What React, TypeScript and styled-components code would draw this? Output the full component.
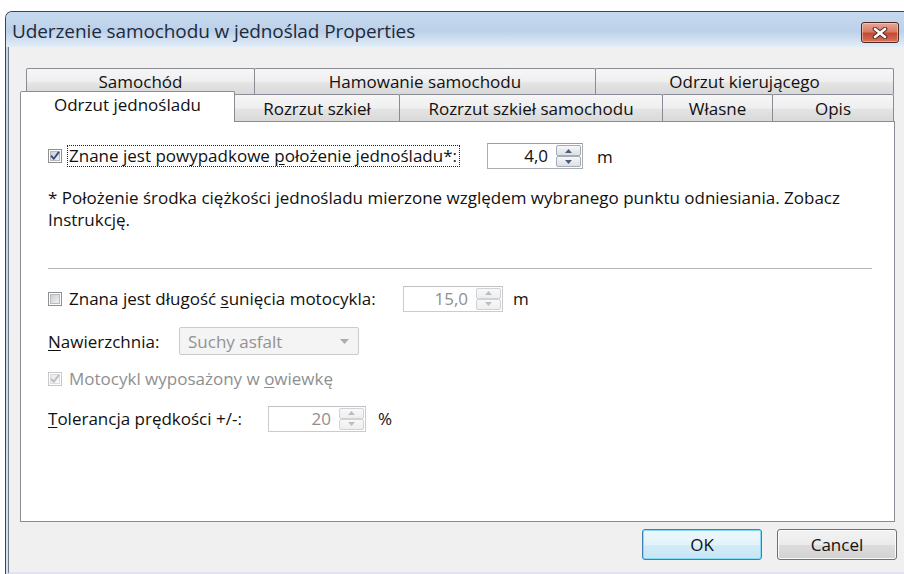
import React from 'react';
import styled, { createGlobalStyle, css } from 'styled-components';

const GlobalStyle = createGlobalStyle`
  html, body {
    margin: 0;
    padding: 0;
    background: #ffffff;
  }
  body {
    font-family: "Open Sans", "Noto Sans", "DejaVu Sans", sans-serif;
    font-size: 17px;
    color: #111;
    overflow: hidden;
  }
`;

const Window = styled.div`
  box-sizing: border-box;
  margin: 11px 0 0 5px;
  width: 899px;
  height: 563px;
  border-top: 1px solid #3b4656;
  border-left: 1px solid #3b4656;
  border-top-left-radius: 7px;
  background: linear-gradient(180deg, #c3d7ed 0%, #bed3ea 40%, #d3e2f2 100%);
  display: flex;
  flex-direction: column;
  overflow: hidden;
`;

const TitleBar = styled.div`
  height: 35px;
  flex: none;
  display: flex;
  align-items: flex-start;
  justify-content: space-between;
  background: linear-gradient(180deg, #c6d9ee 0%, #bcd1e9 55%, #d6e4f3 85%, #e4edf7 100%);
`;

const Title = styled.span`
  margin: 6px 0 0 6px;
  font-size: 19px;
  color: #1c2a3c;
  letter-spacing: -0.1px;
`;

const CloseButton = styled.div`
  box-sizing: border-box;
  width: 38px;
  height: 21px;
  margin: 10px 5px 0 0;
  border: 1px solid #4b2a26;
  border-radius: 3px;
  background: linear-gradient(180deg, #e7a898 0%, #d97c66 45%, #c54a32 55%, #d5735a 100%);
  box-shadow: inset 0 0 0 1px rgba(255, 220, 210, 0.5);
  display: flex;
  align-items: center;
  justify-content: center;
`;

const Client = styled.div`
  flex: 1;
  margin-left: 2px;
  border-left: 1px solid #6f7780;
  border-bottom: 2px solid #e4e2f0;
  background: #f0f0f0;
  padding: 21px 7px 0 11px;
  display: flex;
  flex-direction: column;
`;

const TabStrip = styled.div`
  display: flex;
  flex-direction: column;
`;

const TabRow = styled.div<{ $indent: number; $height: number }>`
  display: flex;
  align-items: flex-end;
  height: ${p => p.$height}px;
  padding-left: ${p => p.$indent}px;
`;

const Tab = styled.div<{ $width: number; $active?: boolean }>`
  box-sizing: border-box;
  flex: none;
  width: ${p => p.$width}px;
  height: 100%;
  margin-left: -1px;
  border: 1px solid #898c95;
  border-bottom: none;
  border-radius: 2px 2px 0 0;
  background: linear-gradient(180deg, #f6f6f6 0%, #efefef 50%, #e4e4e4 55%, #d9d9d9 100%);
  display: flex;
  align-items: center;
  justify-content: center;
  white-space: nowrap;

  &:first-child {
    margin-left: 0;
  }

  ${p =>
    p.$active &&
    css`
      position: relative;
      z-index: 1;
      height: 31px;
      margin-bottom: -1px;
      background: #ffffff;
      padding-bottom: 5px;
    `}
`;

const Panel = styled.div`
  box-sizing: border-box;
  width: 875px;
  height: 401px;
  border: 1px solid #898c95;
  background: #ffffff;
  padding: 21px 23px 0 27px;
  display: flex;
  flex-direction: column;
`;

const FormRow = styled.div<{ $top: number; $height: number }>`
  display: flex;
  align-items: center;
  height: ${p => p.$height}px;
  margin-top: ${p => p.$top}px;
`;

const CheckCell = styled.div<{ $width?: number }>`
  display: flex;
  align-items: center;
  flex: none;
  width: ${p => (p.$width ? `${p.$width}px` : 'auto')};
`;

const Label = styled.span<{ $disabled?: boolean; $width?: number }>`
  white-space: nowrap;
  color: ${p => (p.$disabled ? '#8f8f8f' : '#111')};
  ${p => p.$width && `width: ${p.$width}px; flex: none;`}
`;

const CheckText = styled(Label)<{ $focused?: boolean }>`
  margin-left: 5px;
  padding: 0 2px 0 1px;
  line-height: 20px;
  border: 1px ${p => (p.$focused ? 'dotted #222' : 'solid transparent')};
`;

const Key = styled.span`
  text-decoration: underline;
  text-underline-offset: 2px;
`;

const BoxFrame = styled.span`
  display: inline-flex;
  flex: none;
  width: 14px;
  height: 14px;
`;

const SpinBox = styled.div<{ $width: number; $disabled?: boolean }>`
  box-sizing: border-box;
  flex: none;
  width: ${p => p.$width}px;
  height: 26px;
  border: 1px solid ${p => (p.$disabled ? '#c9cbcf' : '#abadb3')};
  border-top-color: ${p => (p.$disabled ? '#bfc1c5' : '#9a9da4')};
  background: #ffffff;
  display: flex;
  align-items: stretch;
`;

const SpinValue = styled.span<{ $disabled?: boolean }>`
  flex: 1;
  text-align: right;
  padding-right: 8px;
  line-height: 24px;
  color: ${p => (p.$disabled ? '#8f8f8f' : '#111')};
`;

const SpinButtons = styled.div`
  width: 25px;
  display: flex;
  flex-direction: column;
  padding: 1px 1px 1px 0;
`;

const SpinButton = styled.div<{ $disabled?: boolean }>`
  flex: 1;
  box-sizing: border-box;
  border: 1px solid ${p => (p.$disabled ? '#cfd2d6' : '#a6acb3')};
  border-radius: 2px;
  background: ${p =>
    p.$disabled
      ? 'linear-gradient(180deg, #f8f8f8, #eeeeee)'
      : 'linear-gradient(180deg, #f7f8f9 0%, #e8ebee 50%, #dde1e5 100%)'};
  display: flex;
  align-items: center;
  justify-content: center;
`;

const Unit = styled.span<{ $gap: number }>`
  margin-left: ${p => p.$gap}px;
`;

const Footnote = styled.p`
  margin: 18px 0 0 0;
  width: 824px;
  line-height: 22px;
`;

const Separator = styled.div`
  margin-top: 37px;
  width: 824px;
  height: 1px;
  background: #b4b4b4;
`;

const Combo = styled.div`
  box-sizing: border-box;
  width: 180px;
  height: 28px;
  border: 1px solid #c9cbcf;
  border-radius: 2px;
  background: #f4f4f4;
  display: flex;
  align-items: center;
  justify-content: space-between;
  padding: 0 9px 0 8px;
  color: #929292;
`;

const Footer = styled.div`
  display: flex;
  justify-content: flex-end;
  gap: 15px;
  margin-top: 7px;
`;

const Button = styled.div<{ $primary?: boolean }>`
  box-sizing: border-box;
  width: 120px;
  height: 31px;
  border-radius: 3px;
  display: flex;
  align-items: center;
  justify-content: center;
  color: #111;
  border: 1px solid ${p => (p.$primary ? '#3c7fb1' : '#707070')};
  background: ${p =>
    p.$primary
      ? 'linear-gradient(180deg, #eff8fd 0%, #e3f3fb 50%, #d2ebf8 51%, #c8e6f6 100%)'
      : 'linear-gradient(180deg, #f3f3f3 0%, #ebebeb 50%, #dddddd 51%, #d2d2d2 100%)'};
  box-shadow: ${p => (p.$primary ? 'inset 0 0 0 1px #86dbf7' : 'inset 0 0 0 1px #fbfbfb')};
`;

function CheckBox({ checked, disabled }: { checked?: boolean; disabled?: boolean }) {
  const edge = disabled ? '#c5c7ca' : '#8e8f8f';
  const mark = disabled ? '#b8bcc4' : '#3c4d7a';
  const fillId = disabled ? 'cbd' : 'cbn';
  return (
    <BoxFrame>
      <svg width="14" height="14" viewBox="0 0 14 14">
        <defs>
          <linearGradient id={fillId} x1="0" y1="0" x2="1" y2="1">
            <stop offset="0" stopColor={disabled ? '#e6e6e6' : '#c9ccd1'} />
            <stop offset="1" stopColor={disabled ? '#fbfbfb' : '#f4f4f4'} />
          </linearGradient>
        </defs>
        <rect x="0.5" y="0.5" width="13" height="13" fill="#fff" stroke={edge} />
        <rect x="2.5" y="2.5" width="9" height="9" fill={`url(#${fillId})`} stroke={disabled ? '#dcdcdc' : '#b6b9be'} />
        {checked && (
          <path d="M3.5 7.2 L5.8 9.8 L10.6 3.4" fill="none" stroke={mark} strokeWidth="1.9" strokeLinecap="round" strokeLinejoin="round" />
        )}
      </svg>
    </BoxFrame>
  );
}

function Spinner({ value, width, disabled }: { value: string; width: number; disabled?: boolean }) {
  const glyph = disabled ? '#b9bec6' : '#4d5c78';
  return (
    <SpinBox $width={width} $disabled={disabled}>
      <SpinValue $disabled={disabled}>{value}</SpinValue>
      <SpinButtons>
        <SpinButton $disabled={disabled}>
          <svg width="7" height="4" viewBox="0 0 7 4">
            <path d="M0 4 L3.5 0 L7 4 Z" fill={glyph} />
          </svg>
        </SpinButton>
        <SpinButton $disabled={disabled}>
          <svg width="7" height="4" viewBox="0 0 7 4">
            <path d="M0 0 L7 0 L3.5 4 Z" fill={glyph} />
          </svg>
        </SpinButton>
      </SpinButtons>
    </SpinBox>
  );
}

const topTabs = [
  { label: 'Samochód', width: 229 },
  { label: 'Hamowanie samochodu', width: 342 },
  { label: 'Odrzut kierującego', width: 299 },
];

const bottomTabs = [
  { label: 'Odrzut jednośladu', width: 215, active: true },
  { label: 'Rozrzut szkieł', width: 166 },
  { label: 'Rozrzut szkieł samochodu', width: 264 },
  { label: 'Własne', width: 111 },
  { label: 'Opis', width: 122 },
];

export default function App() {
  return (
    <>
      <GlobalStyle />
      <Window>
        <TitleBar>
          <Title>Uderzenie samochodu w jednoślad Properties</Title>
          <CloseButton>
            <svg width="16" height="12" viewBox="0 0 16 12">
              <path d="M3 2 L13 10 M13 2 L3 10" stroke="#5a2a22" strokeWidth="4.6" strokeLinecap="round" />
              <path d="M3 2 L13 10 M13 2 L3 10" stroke="#ffffff" strokeWidth="2.6" strokeLinecap="round" />
            </svg>
          </CloseButton>
        </TitleBar>

        <Client>
          <TabStrip>
            <TabRow $indent={6} $height={26}>
              {topTabs.map(t => (
                <Tab key={t.label} $width={t.width}>
                  {t.label}
                </Tab>
              ))}
            </TabRow>
            <TabRow $indent={0} $height={27}>
              {bottomTabs.map(t => (
                <Tab key={t.label} $width={t.width} $active={t.active}>
                  {t.label}
                </Tab>
              ))}
            </TabRow>
          </TabStrip>

          <Panel>
            <FormRow $top={0} $height={26}>
              <CheckCell $width={439}>
                <CheckBox checked />
                <CheckText $focused>
                  Znane jest powypadkowe <Key>p</Key>ołożenie jednośladu*:
                </CheckText>
              </CheckCell>
              <Spinner value="4,0" width={96} />
              <Unit $gap={14}>m</Unit>
            </FormRow>

            <Footnote>
              * Położenie środka ciężkości jednośladu mierzone względem wybranego punktu odniesiania. Zobacz
              Instrukcję.
            </Footnote>

            <Separator />

            <FormRow $top={16} $height={27}>
              <CheckCell $width={355}>
                <CheckBox />
                <CheckText>
                  Znana jest długość <Key>s</Key>unięcia motocykla:
                </CheckText>
              </CheckCell>
              <Spinner value="15,0" width={100} disabled />
              <Unit $gap={10}>m</Unit>
            </FormRow>

            <FormRow $top={15} $height={28}>
              <Label $width={131}>
                <Key>N</Key>awierzchnia:
              </Label>
              <Combo>
                <span>Suchy asfalt</span>
                <svg width="9" height="5" viewBox="0 0 9 5">
                  <path d="M0 0 L9 0 L4.5 5 Z" fill="#a9adb3" />
                </svg>
              </Combo>
            </FormRow>

            <FormRow $top={13} $height={22}>
              <CheckCell>
                <CheckBox checked disabled />
                <CheckText $disabled>
                  Motocykl wyposażony w <Key>o</Key>wiewkę
                </CheckText>
              </CheckCell>
            </FormRow>

            <FormRow $top={15} $height={27}>
              <Label $width={220}>
                <Key>T</Key>olerancja prędkości +/-:
              </Label>
              <Spinner value="20" width={98} disabled />
              <Unit $gap={12}>%</Unit>
            </FormRow>
          </Panel>

          <Footer>
            <Button $primary>OK</Button>
            <Button>Cancel</Button>
          </Footer>
        </Client>
      </Window>
    </>
  );
}
